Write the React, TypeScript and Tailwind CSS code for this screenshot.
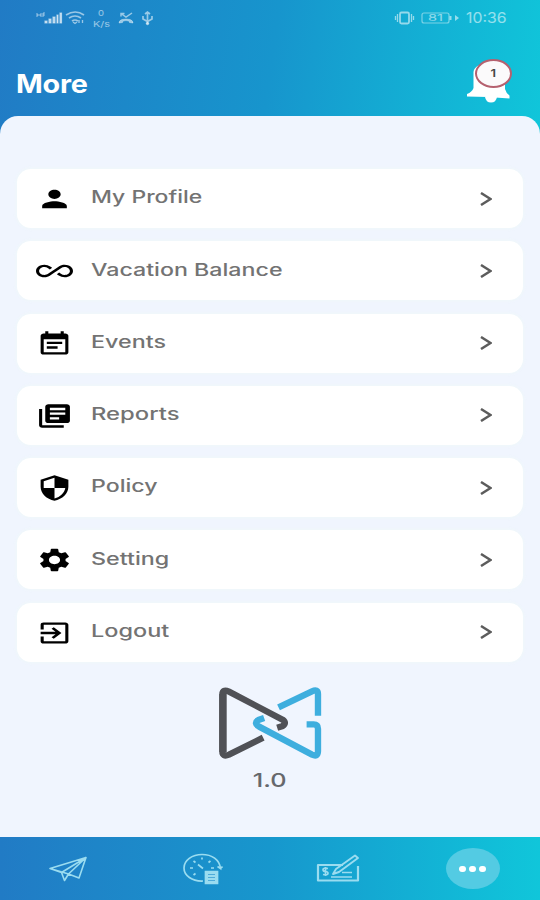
import type { IconType } from "react-icons";
import {
    MdAllInclusive,
    MdEventNote,
    MdExitToApp,
    MdLibraryBooks,
    MdPerson,
    MdSecurity,
    MdSettings,
} from "react-icons/md";

type MenuItem = { label: string; icon: IconType; stretch: string };

const menuItems: MenuItem[] = [
    { label: "My Profile", icon: MdPerson, stretch: "scale-x-[1.35]" },
    { label: "Vacation Balance", icon: MdAllInclusive, stretch: "scale-x-[1.365]" },
    { label: "Events", icon: MdEventNote, stretch: "scale-x-[1.37]" },
    { label: "Reports", icon: MdLibraryBooks, stretch: "scale-x-[1.4]" },
    { label: "Policy", icon: MdSecurity, stretch: "scale-x-[1.36]" },
    { label: "Setting", icon: MdSettings, stretch: "scale-x-[1.37]" },
    { label: "Logout", icon: MdExitToApp, stretch: "scale-x-[1.38]" },
];

function StatusBar() {
    return (
        <div className="flex h-9 items-center justify-between pl-9 pr-8 text-white/55">
            <svg className="h-5 w-[120px]" viewBox="36 8 120 20" fill="none" stroke="currentColor">
                <path d="M37 13v4M37 15h4M41 13v4M43 13v4M45 13h-2M45 15h-2" strokeWidth="1" />
                <path d="M45 23v-2h2v2zM49 23v-4h2v4zM53 23v-6h2v6zM57 23v-8h1v8zM60 23V13h1.500v10z" fill="currentColor" strokeWidth="1.200" />
                <path d="M66 15q9.500-6 18 0M69 18q6-4 12 0M72 21q3-2 6 0" strokeWidth="1.700" />
                <path d="M73 22l2 1.500 2-1.500M79 20v3M82.500 20v3" strokeWidth="1.300" />
                <g fill="currentColor" stroke="none">
                    <text x="98" y="16" fontSize="8" textLength="6" lengthAdjust="spacingAndGlyphs">0</text>
                    <text x="93" y="26.500" fontSize="8" textLength="17" lengthAdjust="spacingAndGlyphs">K/s</text>
                </g>
                <path d="M119 23q0-2.500 3-3.500 4-1 8 0 3 1 3 3.500l-3.500-.5-.5-1.500q-3-.8-6 0l-.5 1.500z" fill="currentColor" strokeWidth=".6" />
                <path d="M121 13.500l5 3.500 6-4M121 16.500v-3h3.500" strokeWidth="1.500" />
                <path d="M147.500 12v12M143 16v3l4.500 2.500L152 19v-3M145 14l2.500-2 2.500 2" strokeWidth="1.700" />
                <circle cx="147.500" cy="23.500" r="1.200" fill="currentColor" />
            </svg>
            <div className="flex items-center">
                <svg className="h-4 w-[68px]" viewBox="394 10 68 16" fill="none" stroke="currentColor">
                    <rect x="400" y="12.500" width="9" height="11" rx="1.500" strokeWidth="1.800" />
                    <path d="M397.500 14v8M395.500 16v4M411.500 14v8M413.500 16v4" strokeWidth="1.300" />
                    <rect x="422" y="13" width="27" height="10" rx="2" strokeWidth="1.200" strokeOpacity=".8" />
                    <path d="M450.500 16v4" strokeWidth="2" />
                    <path d="M455 15l4 3-4 3z" fill="currentColor" stroke="none" />
                    <text x="428" y="21.300" fontSize="9" fill="currentColor" stroke="none" textLength="15" lengthAdjust="spacingAndGlyphs">81</text>
                </svg>
                <span className="ml-1 w-[42px] origin-left scale-x-[1.13] text-[14px] leading-none">10:36</span>
            </div>
        </div>
    );
}

function Bell() {
    return (
        <div className="relative h-[45px] w-[46px]">
            <svg className="h-full w-full" viewBox="467 58 46 45" fill="#fff">
                <path d="M473.500 72q1-8 16-9 15 1 15.500 9v17q1 4 4.500 6.500v3q-22-2-42.500-2v-2.500q5-2 6.500-6z" />
                <path d="M485 97h12q-1 5.500-6 5.500T485 97z" />
            </svg>
            <span className="absolute left-[8px] top-[1px] flex h-[29px] w-[37px] items-center justify-center rounded-[50%] border-2 border-[#b5616f] bg-[#fbfafb] text-[11px] font-semibold text-[#444]">
                <span className="scale-x-[1.2]">1</span>
            </span>
        </div>
    );
}

function MenuRow({ item }: { item: MenuItem }) {
    const Icon = item.icon;
    return (
        <button className="flex h-[59px] w-full items-center rounded-[14px] bg-white pl-[19px] pr-[31px] shadow-[0_0_3px_1px_rgba(240,248,250,0.9)]">
            <Icon preserveAspectRatio="none" className="mt-px h-7 w-[37px] shrink-0 text-black" />
            <span className={`-mt-px ml-[17.5px] origin-left whitespace-nowrap text-[17px] font-medium text-[#737373] ${item.stretch}`}>
                {item.label}
            </span>
            <svg className="ml-auto h-[14px] w-3 shrink-0" viewBox="0 0 12 14" fill="none" stroke="#5c5c5c" strokeWidth="2.500">
                <path d="M1 1l9.500 6L1 13" />
            </svg>
        </button>
    );
}

function Logo() {
    return (
        <svg className="h-[75px] w-[107px]" viewBox="52 45 320 225" preserveAspectRatio="none" fill="none" strokeWidth="19">
            <g stroke="#505156">
                <path d="M190 203L88 254Q68 262 68 244V74Q68 56 88 65L248 149Q262 159 248 168L232 173" />
                <path d="M70 72V246" strokeWidth="22" />
            </g>
            <g stroke="#3eaede">
                <path d="M236 112L336 64Q354 56 354 72V137" />
                <path d="M320 163H341Q354 163 354 176V244Q354 262 336 254L178 170Q160 159 176 150L193 144" />
            </g>
        </svg>
    );
}

function BottomNav() {
    return (
        <nav className="grid h-[63px] grid-cols-4 items-center justify-items-center bg-linear-to-r from-[#217bc5] via-[#1797cd] to-[#10c6da] text-[#9adcf0]">
            <svg className="h-7 w-10" viewBox="48 854 40 28" fill="none" stroke="currentColor" strokeWidth="1.600" strokeLinejoin="round">
                <path d="M50 867.500L86 856.500 79 877 68.500 873zM86 856.500L61.500 871.500M86 856.500L68.500 873 64.500 879.500 61.500 871.500 50 867.500" />
            </svg>
            <svg className="h-8 w-10" viewBox="183 852.500 40 32" fill="none" stroke="currentColor" strokeWidth="1.700">
                <path d="M203 880.500C192 881 184 875 184 867.500S192 854 202 854s17.500 5 18.500 14l-3-2m3 2l2-2" />
                <path d="M202 857v2M190 867.500h3M211 867.500h3M193.500 860.500l2 1.500M210.500 860.500l-2 1.500M193.500 874.500l2-1.500M198 864l5 4" />
                <path d="M205.500 871h12v12h-12z" fill="currentColor" />
                <path d="M208 874h7M208 877h7M208 880h7" stroke="#4fabd9" strokeWidth="1" />
            </svg>
            <svg className="h-8 w-11" viewBox="316 854 44 32" fill="none" stroke="currentColor" strokeWidth="2.200" strokeLinejoin="round">
                <path d="M343 866H318v15.500h40V867" />
                <path d="M333 875l3-5 19-13.500 3 2.500-19 14z" strokeWidth="1.900" />
                <path d="M331 878h21M342 873.500h10" strokeWidth="1.600" />
                <path d="M328 869.500q-5-1-5 1t2.500 2 2.500 2-5 1M325.500 868v9" strokeWidth="1.700" />
            </svg>
            <span className="flex h-[41px] w-[54px] items-center justify-center gap-[3px] rounded-[50%] bg-[#53cbe3]">
                <i className="h-[6px] w-[7px] rounded-full bg-white" />
                <i className="h-[6px] w-[7px] rounded-full bg-white" />
                <i className="h-[6px] w-[7px] rounded-full bg-white" />
            </span>
        </nav>
    );
}

export default function App() {
    return (
        <div className="flex h-[900px] w-[540px] flex-col overflow-hidden bg-[linear-gradient(98deg,#217bc5_0%,#1795cd_50%,#10c6da_100%)] bg-[length:540px_140px] font-['Inter',sans-serif]">
            <header className="h-[116px] shrink-0">
                <StatusBar />
                <div className="flex items-start justify-between pl-4 pr-[27px] pt-[22px]">
                    <h1 className="mt-[11px] origin-left scale-x-[1.15] text-[25px] font-bold leading-[30px] tracking-[-0.2px] text-white">More</h1>
                    <Bell />
                </div>
            </header>
            <main className="flex flex-1 flex-col items-center rounded-t-[18px] bg-[#f0f5fe] px-[17px] pt-[53px]">
                <div className="flex w-full flex-col gap-[13.300px]">
                    {menuItems.map((item) => (
                        <MenuRow key={item.label} item={item} />
                    ))}
                </div>
                <div className="mt-[23px]">
                    <Logo />
                </div>
                <p className="mt-[7px] scale-x-[1.33] text-[19px] font-medium leading-7 text-[#66686c]">1.0</p>
            </main>
            <BottomNav />
        </div>
    );
}
